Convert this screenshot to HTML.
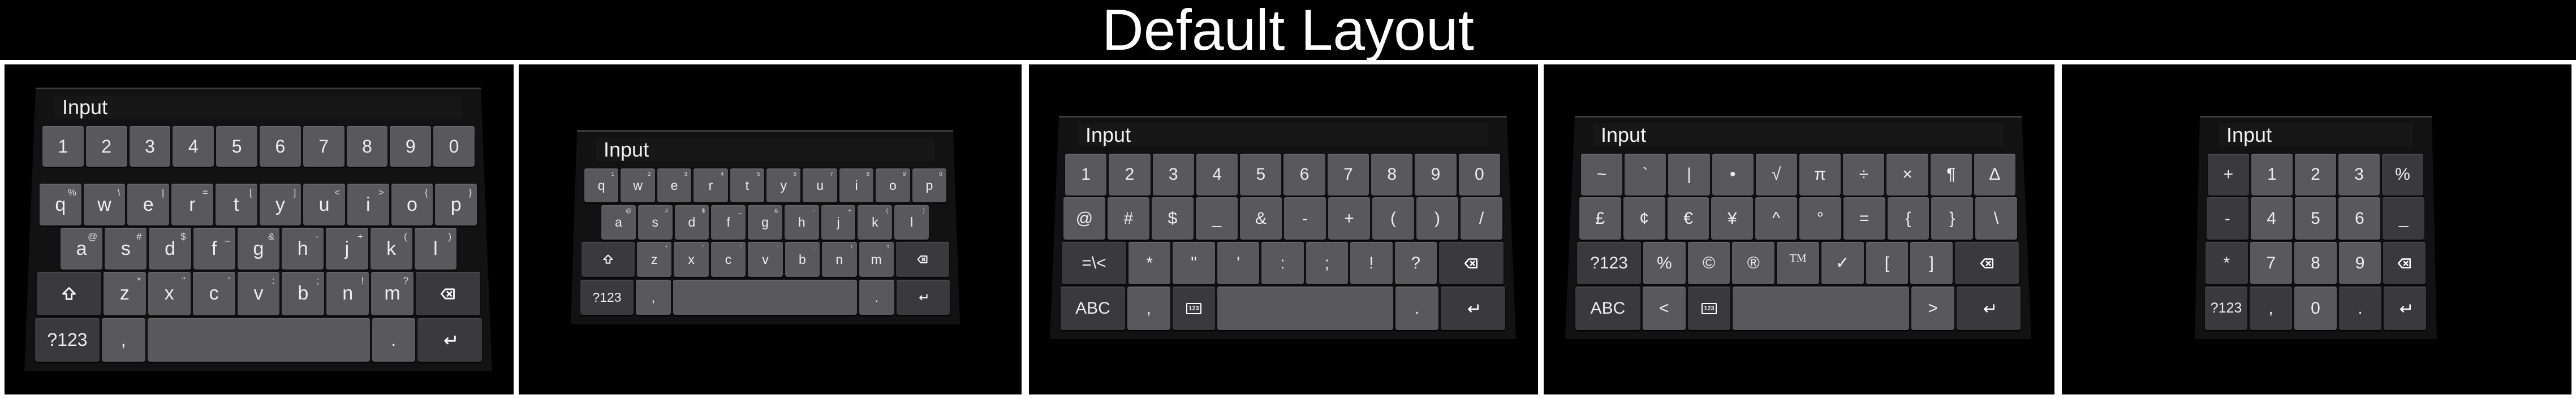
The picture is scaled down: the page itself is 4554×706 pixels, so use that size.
<!DOCTYPE html>
<html><head><meta charset="utf-8"><style>
*{margin:0;padding:0;box-sizing:border-box}
body{width:4554px;height:706px;background:#fff;position:relative;overflow:hidden;font-family:"Liberation Sans",sans-serif}
.top{position:absolute;left:0;top:0;width:4554px;height:106px;background:#000}
.title{position:absolute;left:0;top:0;width:4554px;text-align:center;color:#fff;font-size:102px;line-height:106px;letter-spacing:0px}
.p{position:absolute;top:114px;height:584px;background:#000}
.kb{position:absolute;background:#121212}
.edge{position:absolute;height:3px;background:#3c3c3c}
.in{position:absolute;background:#171717;color:#f2f2f2;font-size:36px;line-height:41px}
.in span{position:absolute;top:0}
.r{position:absolute;display:flex;gap:4px}
.k{flex:1;position:relative;background:#59585d;border-radius:4px;color:#eee;display:flex;align-items:center;justify-content:center;box-shadow:inset 0 2px 0 #66656a,0 2px 2px #000}
.d{background:#3a3a3c;box-shadow:inset 0 2px 0 #47474a,0 2px 2px #000}
.s{position:absolute;right:12%;top:8%;color:#ddd}
svg{fill:none;stroke:#fff;stroke-width:2.4;stroke-linejoin:round;stroke-linecap:round}
.ic{border:2px solid #fff;border-radius:2px;font-size:11px;font-weight:bold;padding:2px 2px;line-height:12px}
</style></head><body>
<div class="top"></div>
<div class="title">Default Layout</div>
<div class="p" style="left:8px;width:900px"></div>
<div class="p" style="left:917px;width:889px"></div>
<div class="p" style="left:1819px;width:900px"></div>
<div class="p" style="left:2729px;width:903px"></div>
<div class="p" style="left:3645px;width:901px"></div>

<!-- KB1 -->
<div class="kb" style="left:43px;top:155px;width:827px;height:502px;clip-path:polygon(20px 0,807px 0,827px 502px,0 502px)"></div>
<div class="edge" style="left:63px;top:155px;width:787px"></div>
<div class="in" style="left:97px;top:169px;width:720px;height:41px"><span style="left:13px">Input</span></div>
<div class="r" style="left:75px;top:223px;width:764px;height:72px;font-size:32px">
<div class="k">1</div><div class="k">2</div><div class="k">3</div><div class="k">4</div><div class="k">5</div><div class="k">6</div><div class="k">7</div><div class="k">8</div><div class="k">9</div><div class="k">0</div></div>
<div class="r" style="left:70px;top:325px;width:773px;height:74px;font-size:34px">
<div class="k">q<i class="s" style="font-size:17px;font-style:normal">%</i></div><div class="k">w<i class="s" style="font-size:17px;font-style:normal">\</i></div><div class="k">e<i class="s" style="font-size:17px;font-style:normal">|</i></div><div class="k">r<i class="s" style="font-size:17px;font-style:normal">=</i></div><div class="k">t<i class="s" style="font-size:17px;font-style:normal">[</i></div><div class="k">y<i class="s" style="font-size:17px;font-style:normal">]</i></div><div class="k">u<i class="s" style="font-size:17px;font-style:normal">&lt;</i></div><div class="k">i<i class="s" style="font-size:17px;font-style:normal">&gt;</i></div><div class="k">o<i class="s" style="font-size:17px;font-style:normal">{</i></div><div class="k">p<i class="s" style="font-size:17px;font-style:normal">}</i></div></div>
<div class="r" style="left:107px;top:403px;width:700px;height:74px;font-size:34px">
<div class="k">a<i class="s" style="font-size:17px;font-style:normal">@</i></div><div class="k">s<i class="s" style="font-size:17px;font-style:normal">#</i></div><div class="k">d<i class="s" style="font-size:17px;font-style:normal">$</i></div><div class="k">f<i class="s" style="font-size:17px;font-style:normal">_</i></div><div class="k">g<i class="s" style="font-size:17px;font-style:normal">&amp;</i></div><div class="k">h<i class="s" style="font-size:17px;font-style:normal">-</i></div><div class="k">j<i class="s" style="font-size:17px;font-style:normal">+</i></div><div class="k">k<i class="s" style="font-size:17px;font-style:normal">(</i></div><div class="k">l<i class="s" style="font-size:17px;font-style:normal">)</i></div></div>
<div class="r" style="left:65px;top:481px;width:784px;height:77px;font-size:34px">
<div class="k d" style="flex:0 0 114px"><svg width="28" height="28" viewBox="0 0 24 24"><path d="M12 3L3 12H8V20H16V12H21Z"/></svg></div>
<div class="k">z<i class="s" style="font-size:17px;font-style:normal">*</i></div><div class="k">x<i class="s" style="font-size:17px;font-style:normal">"</i></div><div class="k">c<i class="s" style="font-size:17px;font-style:normal">'</i></div><div class="k">v<i class="s" style="font-size:17px;font-style:normal">:</i></div><div class="k">b<i class="s" style="font-size:17px;font-style:normal">;</i></div><div class="k">n<i class="s" style="font-size:17px;font-style:normal">!</i></div><div class="k">m<i class="s" style="font-size:17px;font-style:normal">?</i></div>
<div class="k d" style="flex:0 0 114px"><svg width="28" height="28" viewBox="0 0 24 24"><path d="M8 5H21V19H8L2 12Z M11 9L17 15M17 9L11 15"/></svg></div></div>
<div class="r" style="left:62px;top:563px;width:790px;height:77px;font-size:32px">
<div class="k d" style="flex:0 0 114px">?123</div><div class="k">,</div><div class="k" style="flex:0 0 393px"></div><div class="k">.</div>
<div class="k d" style="flex:0 0 114px"><svg width="28" height="28" viewBox="0 0 24 24"><path d="M20 6V13H5M9 9L5 13L9 17"/></svg></div></div>

<!-- KB2 -->
<div class="kb" style="left:1009px;top:230px;width:688px;height:344px;clip-path:polygon(11px 0,676px 0,688px 344px,0 344px)"></div>
<div class="edge" style="left:1020px;top:230px;width:665px"></div>
<div class="in" style="left:1054px;top:244px;width:598px;height:41px"><span style="left:13px">Input</span></div>
<div class="r" style="left:1033px;top:298px;width:640px;height:60px;font-size:23px">
<div class="k">q<i class="s" style="font-size:10px;font-style:normal">1</i></div><div class="k">w<i class="s" style="font-size:10px;font-style:normal">2</i></div><div class="k">e<i class="s" style="font-size:10px;font-style:normal">3</i></div><div class="k">r<i class="s" style="font-size:10px;font-style:normal">4</i></div><div class="k">t<i class="s" style="font-size:10px;font-style:normal">5</i></div><div class="k">y<i class="s" style="font-size:10px;font-style:normal">6</i></div><div class="k">u<i class="s" style="font-size:10px;font-style:normal">7</i></div><div class="k">i<i class="s" style="font-size:10px;font-style:normal">8</i></div><div class="k">o<i class="s" style="font-size:10px;font-style:normal">9</i></div><div class="k">p<i class="s" style="font-size:10px;font-style:normal">0</i></div></div>
<div class="r" style="left:1063px;top:363px;width:579px;height:61px;font-size:23px">
<div class="k">a<i class="s" style="font-size:10px;font-style:normal">@</i></div><div class="k">s<i class="s" style="font-size:10px;font-style:normal">#</i></div><div class="k">d<i class="s" style="font-size:10px;font-style:normal">$</i></div><div class="k">f<i class="s" style="font-size:10px;font-style:normal">_</i></div><div class="k">g<i class="s" style="font-size:10px;font-style:normal">&amp;</i></div><div class="k">h<i class="s" style="font-size:10px;font-style:normal">-</i></div><div class="k">j<i class="s" style="font-size:10px;font-style:normal">+</i></div><div class="k">k<i class="s" style="font-size:10px;font-style:normal">(</i></div><div class="k">l<i class="s" style="font-size:10px;font-style:normal">)</i></div></div>
<div class="r" style="left:1028px;top:428px;width:650px;height:62px;font-size:23px">
<div class="k d" style="flex:0 0 94px"><svg width="20" height="20" viewBox="0 0 24 24"><path d="M12 3L3 12H8V20H16V12H21Z"/></svg></div>
<div class="k">z<i class="s" style="font-size:10px;font-style:normal">*</i></div><div class="k">x<i class="s" style="font-size:10px;font-style:normal">"</i></div><div class="k">c<i class="s" style="font-size:10px;font-style:normal">'</i></div><div class="k">v<i class="s" style="font-size:10px;font-style:normal">:</i></div><div class="k">b<i class="s" style="font-size:10px;font-style:normal">;</i></div><div class="k">n<i class="s" style="font-size:10px;font-style:normal">!</i></div><div class="k">m<i class="s" style="font-size:10px;font-style:normal">?</i></div>
<div class="k d" style="flex:0 0 94px"><svg width="20" height="20" viewBox="0 0 24 24"><path d="M8 5H21V19H8L2 12Z M11 9L17 15M17 9L11 15"/></svg></div></div>
<div class="r" style="left:1026px;top:495px;width:653px;height:62px;font-size:23px">
<div class="k d" style="flex:0 0 94px">?123</div><div class="k">,</div><div class="k" style="flex:0 0 325px"></div><div class="k">.</div>
<div class="k d" style="flex:0 0 94px"><svg width="20" height="20" viewBox="0 0 24 24"><path d="M20 6V13H5M9 9L5 13L9 17"/></svg></div></div>

<!-- KB3 -->
<div class="kb" style="left:1856px;top:205px;width:824px;height:395px;clip-path:polygon(16px 0,808px 0,824px 395px,0 395px)"></div>
<div class="edge" style="left:1872px;top:205px;width:792px"></div>
<div class="in" style="left:1906px;top:218px;width:724px;height:41px"><span style="left:13px">Input</span></div>
<div class="r" style="left:1883px;top:272px;width:769px;height:74px;font-size:30px">
<div class="k">1</div><div class="k">2</div><div class="k">3</div><div class="k">4</div><div class="k">5</div><div class="k">6</div><div class="k">7</div><div class="k">8</div><div class="k">9</div><div class="k">0</div></div>
<div class="r" style="left:1880px;top:349px;width:776px;height:75px;font-size:30px">
<div class="k">@</div><div class="k">#</div><div class="k">$</div><div class="k">_</div><div class="k">&amp;</div><div class="k">-</div><div class="k">+</div><div class="k">(</div><div class="k">)</div><div class="k">/</div></div>
<div class="r" style="left:1877px;top:428px;width:781px;height:75px;font-size:30px">
<div class="k d" style="flex:0 0 114px">=\&lt;</div><div class="k">*</div><div class="k">"</div><div class="k">'</div><div class="k">:</div><div class="k">;</div><div class="k">!</div><div class="k">?</div>
<div class="k d" style="flex:0 0 114px"><svg width="26" height="26" viewBox="0 0 24 24"><path d="M8 5H21V19H8L2 12Z M11 9L17 15M17 9L11 15"/></svg></div></div>
<div class="r" style="left:1875px;top:507px;width:786px;height:77px;font-size:30px">
<div class="k d" style="flex:0 0 114px">ABC</div><div class="k">,</div><div class="k d"><span class="ic">123</span></div><div class="k" style="flex:0 0 311px"></div><div class="k">.</div>
<div class="k d" style="flex:0 0 114px"><svg width="26" height="26" viewBox="0 0 24 24"><path d="M20 6V13H5M9 9L5 13L9 17"/></svg></div></div>

<!-- KB4 -->
<div class="kb" style="left:2767px;top:205px;width:824px;height:395px;clip-path:polygon(17px 0,807px 0,824px 395px,0 395px)"></div>
<div class="edge" style="left:2784px;top:205px;width:790px"></div>
<div class="in" style="left:2816px;top:218px;width:726px;height:41px"><span style="left:14px">Input</span></div>
<div class="r" style="left:2795px;top:272px;width:768px;height:74px;font-size:30px">
<div class="k">~</div><div class="k">`</div><div class="k">|</div><div class="k">•</div><div class="k">√</div><div class="k">π</div><div class="k">÷</div><div class="k">×</div><div class="k">¶</div><div class="k">Δ</div></div>
<div class="r" style="left:2792px;top:349px;width:774px;height:75px;font-size:30px">
<div class="k">£</div><div class="k">¢</div><div class="k">€</div><div class="k">¥</div><div class="k">^</div><div class="k">°</div><div class="k">=</div><div class="k">{</div><div class="k">}</div><div class="k">\</div></div>
<div class="r" style="left:2788px;top:428px;width:781px;height:75px;font-size:30px">
<div class="k d" style="flex:0 0 113px">?123</div><div class="k">%</div><div class="k">©</div><div class="k">®</div><div class="k" style="font-family:'Liberation Serif',serif;font-size:20px;align-items:flex-start;padding-top:18px">TM</div><div class="k">✓</div><div class="k">[</div><div class="k">]</div>
<div class="k d" style="flex:0 0 113px"><svg width="26" height="26" viewBox="0 0 24 24"><path d="M8 5H21V19H8L2 12Z M11 9L17 15M17 9L11 15"/></svg></div></div>
<div class="r" style="left:2785px;top:507px;width:787px;height:77px;font-size:30px">
<div class="k d" style="flex:0 0 115px">ABC</div><div class="k">&lt;</div><div class="k d"><span class="ic">123</span></div><div class="k" style="flex:0 0 312px"></div><div class="k">&gt;</div>
<div class="k d" style="flex:0 0 113px"><svg width="26" height="26" viewBox="0 0 24 24"><path d="M20 6V13H5M9 9L5 13L9 17"/></svg></div></div>

<!-- KB5 -->
<div class="kb" style="left:3880px;top:205px;width:428px;height:395px;clip-path:polygon(9px 0,419px 0,428px 395px,0 395px)"></div>
<div class="edge" style="left:3889px;top:205px;width:410px"></div>
<div class="in" style="left:3923px;top:218px;width:342px;height:41px"><span style="left:13px">Input</span></div>
<div class="r" style="left:3903px;top:272px;width:381px;height:74px;font-size:30px">
<div class="k d">+</div><div class="k">1</div><div class="k">2</div><div class="k">3</div><div class="k d">%</div></div>
<div class="r" style="left:3901px;top:349px;width:385px;height:75px;font-size:30px">
<div class="k d">-</div><div class="k">4</div><div class="k">5</div><div class="k">6</div><div class="k d">_</div></div>
<div class="r" style="left:3899px;top:428px;width:389px;height:75px;font-size:30px">
<div class="k d">*</div><div class="k">7</div><div class="k">8</div><div class="k">9</div><div class="k d"><svg width="26" height="26" viewBox="0 0 24 24"><path d="M8 5H21V19H8L2 12Z M11 9L17 15M17 9L11 15"/></svg></div></div>
<div class="r" style="left:3898px;top:507px;width:391px;height:77px;font-size:30px">
<div class="k d" style="font-size:25px">?123</div><div class="k d">,</div><div class="k">0</div><div class="k d">.</div><div class="k d"><svg width="26" height="26" viewBox="0 0 24 24"><path d="M20 6V13H5M9 9L5 13L9 17"/></svg></div></div>
</body></html>
